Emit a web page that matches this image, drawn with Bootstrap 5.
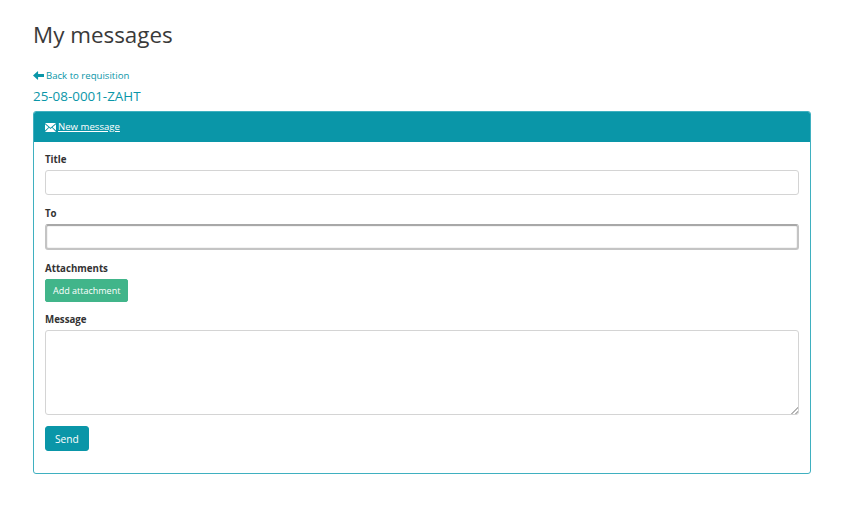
<!DOCTYPE html>
<html lang="en">
<head>
  <meta charset="UTF-8">
  <meta name="viewport" content="width=device-width, initial-scale=1.0">
  <title>My messages</title>
  <link href="https://cdn.jsdelivr.net/npm/bootstrap@5.3.3/dist/css/bootstrap.min.css" rel="stylesheet">
  <style>
    body { background: #fff; color: #333; font-family: "Open Sans", sans-serif; font-size: 11px; }
    .page-wrap { padding: 19px 36px 0 33px; }
    .page-title { font-size: 22.4px; font-weight: 400; line-height: 32px; color: #3a3a3a; margin-bottom: 17px; }
    .back-link { display: flex; align-items: center; gap: 2px; font-size: 9.6px; line-height: 15px; color: #0a96a8; text-decoration: none; }
    .req-no { font-size: 13.4px; line-height: 19px; color: #0a96a8; margin: 4px 0 5px; font-weight: 400; }
    .msg-card { border: 1px solid #3fb0c0; border-radius: 3px; }
    .msg-head { background: #0a96a8; color: #fff; height: 30px; padding: 0 11px; display: flex; align-items: center; gap: 2px; border-radius: 2px 2px 0 0; font-size: 9.6px; }
    .msg-head a { color: #fff; }
    .msg-body { padding: 11px 11px 22px; }
    .fld-label { display: block; font-weight: 700; font-size: 9.7px; line-height: 14px; color: #333; margin-bottom: 3px; }
    .fld-input { height: 25px; border: 1px solid #d4d4d4; border-radius: 3px; padding: 2px 8px; font-size: 11px; box-shadow: none; }
    .fld-to { border: 2px solid #c4c4c4; border-top-color: #a8a8a8; height: 26px; box-shadow: inset 0 0 1px #888; }
    .fld-area { height: 85px; border: 1px solid #d4d4d4; border-radius: 3px; font-size: 11px; display: block; }
    .fld-area::-webkit-resizer { background: linear-gradient(135deg, transparent 45%, #b5b5b5 45%, #b5b5b5 60%, transparent 60%, transparent 72%, #b5b5b5 72%, #b5b5b5 87%, transparent 87%) right bottom / 7px 7px no-repeat; }
    .fld-group { margin-bottom: 12px; }
    .fld-group-tight { margin-bottom: 11px; }
    .btn-attach { background: #41b58a; border: 1px solid #41b58a; color: #fff; font-size: 9px; height: 23px; padding: 0 7px; border-radius: 2px; line-height: 20px; display: block; }
    .btn-send { background: #0a96a8; border: 1px solid #0a96a8; color: #fff; font-size: 10.2px; height: 25px; padding: 0 9px; border-radius: 3px; line-height: 22px; }
  </style>
</head>
<body>
<div class="page-wrap">
  <h1 class="page-title">My messages</h1>
  <a class="back-link" href="#">
    <svg width="11" height="9" viewBox="0 0 11 9"><path d="M0 4.5 4.4 .4a.4.4 0 0 1 .7.3v2.3H11v3H5.100v2.300a.4.4 0 0 1-.7.3z" fill="#0a96a8"/></svg>
    Back to requisition
  </a>
  <h2 class="req-no">25-08-0001-ZAHT</h2>
  <div class="msg-card">
    <div class="msg-head">
      <svg width="11" height="9" viewBox="0 0 11 9"><path d="M0 0h11L5.500 4.700zM0 1.200v6.300l3.500-3.300zM11 1.200v6.300L7.500 4.200zM4.100 4.800l1.400 1.200 1.400-1.200L11 9H0z" fill="#fff"/></svg>
      <a href="#">New message</a>
    </div>
    <form class="msg-body">
      <div class="fld-group">
        <label class="fld-label">Title</label>
        <input type="text" class="form-control fld-input">
      </div>
      <div class="fld-group">
        <label class="fld-label">To</label>
        <input type="text" class="form-control fld-input fld-to">
      </div>
      <div class="fld-group-tight">
        <label class="fld-label">Attachments</label>
        <button type="button" class="btn btn-attach">Add attachment</button>
      </div>
      <div class="fld-group-tight">
        <label class="fld-label">Message</label>
        <textarea class="form-control fld-area"></textarea>
      </div>
      <button type="button" class="btn btn-send">Send</button>
    </form>
  </div>
</div>
<script src="https://cdn.jsdelivr.net/npm/bootstrap@5.3.3/dist/js/bootstrap.bundle.min.js"></script>
</body>
</html>
